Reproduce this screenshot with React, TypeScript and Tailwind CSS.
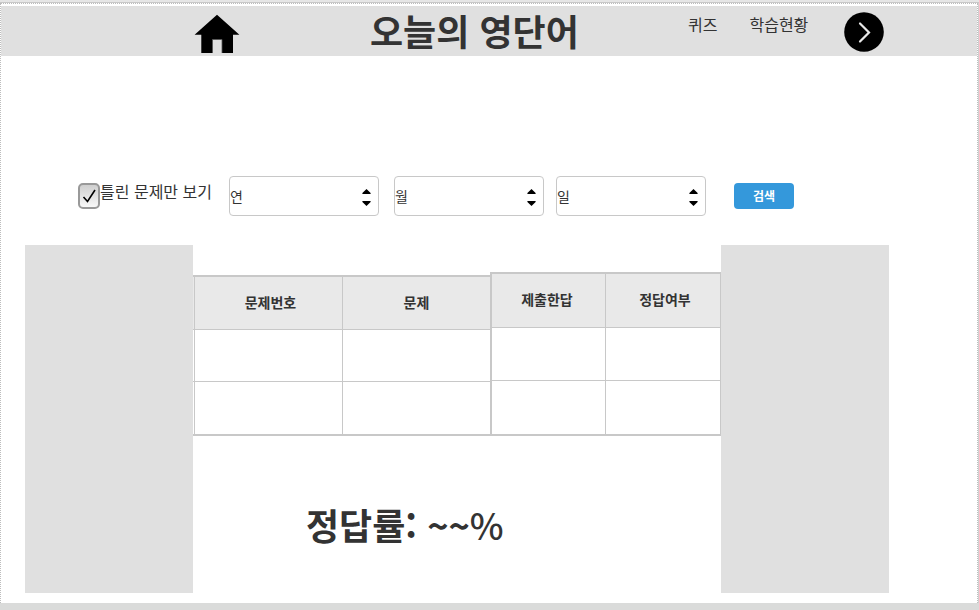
function HomeIcon() {
  return (
    <svg width="46" height="40" viewBox="0 0 46 40" className="block">
      <path
        fillRule="evenodd"
        fill="#000"
        d="M23 0.8 L45.4 20.8 H39 V39 H28 V25.5 H18.5 V39 H7.3 V20.8 H0.6 Z"
      />
      <path d="M28 39V25.5H18.5V39" fill="none" stroke="#555" strokeWidth="0.8" />
    </svg>
  );
}

function NextIcon() {
  return (
    <svg width="40" height="40" viewBox="0 0 40 40" className="block">
      <circle cx="20" cy="20" r="19.8" fill="#000" />
      <path
        d="M16 11.5 L25 20.4 L16 29.5"
        fill="none"
        stroke="#e8e8e8"
        strokeWidth="2.2"
        strokeLinecap="round"
      />
    </svg>
  );
}

function Spinner({ label }: { label: string }) {
  return (
    <div className="flex h-[40px] w-[150px] items-center justify-between rounded-[4px] border border-[#c8c8c8] bg-white pr-[7px] text-[14px] leading-[20px]">
      <span>{label}</span>
      <svg width="9" height="18" viewBox="0 0 9 18" className="mt-[4px]">
        <path d="M4.5 0 L8.6 4 V5 H0.4 V4 Z M0.4 12 H8.6 V13 L4.5 17 L0.4 13 Z" fill="#000" />
      </svg>
    </div>
  );
}

function Heading({ children, pad }: { children: string; pad: string }) {
  return (
    <div
      className={`flex items-center justify-center border-[#c8c8c8] bg-[#e9e9e9] pb-[3px] text-[14px] leading-[20px] font-bold ${pad}`}
    >
      {children}
    </div>
  );
}

export default function App() {
  return (
    <div
      className="flex h-[610px] w-[979px] flex-col overflow-hidden bg-white text-[#333] [font-family:'Noto_Sans_CJK_KR',sans-serif]"
      lang="ko"
    >
      <div className="h-[3px] shrink-0 border-b border-[#c8c8c8] bg-[#e6e6e6]" />
      <div className="flex h-[600px] shrink-0 flex-col border-r border-[#d0d0d0]">
        <div className="flex h-full flex-col border-x border-t border-dotted border-[#bdbdbd]">
          <header className="mt-[2px] flex h-[50px] shrink-0 items-start bg-[#e0e0e0]">
            <div className="mt-[8px] ml-[193px] w-[46px]">
              <HomeIcon />
            </div>
            <h1 className="-mt-[2px] ml-[130px] w-[318px] text-[36px] leading-[52px] font-bold whitespace-nowrap">
              오늘의 영단어
            </h1>
            <nav className="mt-[6px] flex w-[156px] gap-[32px] text-[16px] leading-[24px] font-normal whitespace-nowrap">
              <a>퀴즈</a>
              <a>학습현황</a>
            </nav>
            <div className="mt-[6px] w-[40px]">
              <NextIcon />
            </div>
          </header>

          <section className="mt-[120px] flex h-[40px] shrink-0 items-start pl-[77px]">
            <div className="mt-[7px] flex h-[26px] w-[22px] items-center justify-center rounded-[5px] border-2 border-[#999] bg-linear-to-b from-[#cfcfcf] to-[#f8f8f8]">
              <svg width="16" height="18" viewBox="0 0 16 18">
                <path d="M2.5 10 L6.5 14.5 L14 3" fill="none" stroke="#000" strokeWidth="1.6" />
              </svg>
            </div>
            <span className="mt-[3px] w-[129px] text-[16px] leading-[24px] font-normal whitespace-nowrap">
              틀린 문제만 보기
            </span>
            <Spinner label="연" />
            <div className="w-[15px]" />
            <Spinner label="월" />
            <div className="w-[12px]" />
            <Spinner label="일" />
            <button className="mt-[7px] ml-[28px] h-[26px] w-[60px] rounded-[4px] bg-[#3498db] text-[12px] leading-[24px] font-bold text-white">
              검색
            </button>
          </section>

          <main className="mt-[29px] flex h-[348px] shrink-0 pl-[24px]">
            <aside className="w-[168px] bg-[#e0e0e0]" />
            <div className="flex w-[528px] flex-col">
              <div className="flex h-[191px] items-end">
                <div className="grid h-[161px] w-[297px] grid-cols-[1px_148px_148px] grid-rows-[53px_52px_52px] border-y-2 border-[#c8c8c8] [&>div]:border-b [&>div]:border-[#c8c8c8] [&>div:nth-child(n+7)]:border-b-0 [&>div:not(:nth-child(3n+1))]:border-l">
                  <div className="bg-[#e9e9e9]" />
                  <Heading pad="pl-[4px]">문제번호</Heading>
                  <Heading pad="pl-0">문제</Heading>
                  <div />
                  <div />
                  <div />
                  <div />
                  <div />
                  <div />
                </div>
                <div className="grid h-[164px] w-[231px] grid-cols-[113px_115px] grid-rows-[54px_53px_53px] border-y-2 border-r border-l-2 border-[#c8c8c8] [&>div]:border-b [&>div]:border-[#c8c8c8] [&>div:nth-child(even)]:border-l [&>div:nth-child(n+5)]:border-b-0">
                  <Heading pad="pr-[3px]">제출한답</Heading>
                  <Heading pad="pl-[4px]">정답여부</Heading>
                  <div />
                  <div />
                  <div />
                  <div />
                </div>
              </div>
              <p className="mt-[61px] ml-[113px] text-[36px] leading-[54px] font-bold whitespace-nowrap">
                정답률: ~~<span className="font-medium">%</span>
              </p>
            </div>
            <aside className="w-[168px] bg-[#e0e0e0]" />
          </main>
        </div>
      </div>
      <footer className="h-[7px] shrink-0 bg-[#dadbda]" />
    </div>
  );
}
